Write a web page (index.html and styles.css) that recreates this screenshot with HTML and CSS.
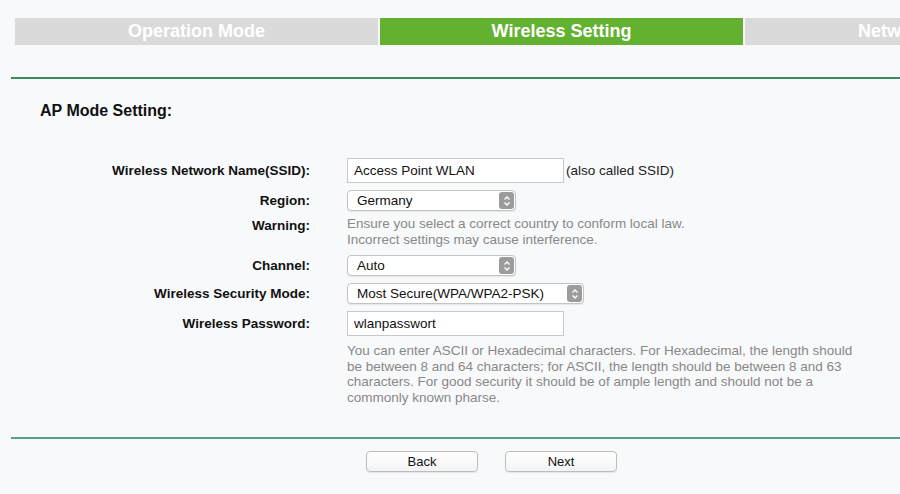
FILE: index.html
```html
<!DOCTYPE html>
<html lang="en">
<head>
    <meta charset="UTF-8">
    <title>Quick Setup - Wireless Setting</title>
    <link rel="stylesheet" href="styles.css">
</head>
<body>
    <div class="steps">
        <div class="step">Operation Mode</div>
        <div class="step active">Wireless Setting</div>
        <div class="step">Network Setting</div>
    </div>
    <hr class="line">

    <h2 class="title">AP Mode Setting:</h2>

    <div class="form">
        <label class="label">Wireless Network Name(SSID):</label>
        <div class="field">
            <input type="text" class="text-input" value="Access Point WLAN">
            <span class="note">(also called SSID)</span>
        </div>

        <label class="label">Region:</label>
        <div class="field">
            <span class="select region">Germany<span class="arrow"><svg width="8" height="12" viewBox="0 0 8 12"><path d="M1.5 4.5 L4 2 L6.5 4.5 M1.5 7.5 L4 10 L6.5 7.5" fill="none" stroke="#fff" stroke-width="1.4"/></svg></span></span>
        </div>

        <label class="label top">Warning:</label>
        <div class="field hint">Ensure you select a correct country to conform local law.<br>Incorrect settings may cause interference.</div>

        <label class="label">Channel:</label>
        <div class="field">
            <span class="select region">Auto<span class="arrow"><svg width="8" height="12" viewBox="0 0 8 12"><path d="M1.5 4.5 L4 2 L6.5 4.5 M1.5 7.5 L4 10 L6.5 7.5" fill="none" stroke="#fff" stroke-width="1.4"/></svg></span></span>
        </div>

        <label class="label">Wireless Security Mode:</label>
        <div class="field">
            <span class="select security">Most Secure(WPA/WPA2-PSK)<span class="arrow"><svg width="8" height="12" viewBox="0 0 8 12"><path d="M1.5 4.5 L4 2 L6.5 4.5 M1.5 7.5 L4 10 L6.5 7.5" fill="none" stroke="#fff" stroke-width="1.4"/></svg></span></span>
        </div>

        <label class="label">Wireless Password:</label>
        <div class="field">
            <input type="text" class="text-input" value="wlanpasswort">
        </div>

        <div></div>
        <div class="field hint help">You can enter ASCII or Hexadecimal characters. For Hexadecimal, the length should be between 8 and 64 characters; for ASCII, the length should be between 8 and 63 characters. For good security it should be of ample length and should not be a commonly known pharse.</div>
    </div>

    <hr class="line bottom">

    <div class="buttons">
        <button class="btn">Back</button>
        <button class="btn">Next</button>
    </div>
</body>
</html>
```

FILE: styles.css
```css
* {
    margin: 0;
    padding: 0;
    box-sizing: border-box;
    font-family: "Liberation Sans", Arial, sans-serif;
}
body {
    background-color: #f8f9fa;
    width: 900px;
    height: 494px;
    overflow: hidden;
}
.steps {
    display: flex;
    gap: 2px;
    padding: 18px 0 0 15px;
    white-space: nowrap;
}
.step {
    flex: 0 0 363px;
    height: 27px;
    line-height: 27px;
    text-align: center;
    background-color: #dadada;
    color: #fff;
    font-size: 18px;
    font-weight: bold;
}
.step.active {
    background-color: #62b22f;
}
.line {
    border: none;
    height: 2px;
    background-color: #3a8a5e;
    margin: 32px 0 0 11px;
}
.line.bottom {
    background-color: #55a08a;
    margin-top: 31px;
}
.title {
    font-size: 16px;
    font-weight: bold;
    color: #111;
    margin: 23px 0 0 40px;
}
.form {
    display: grid;
    grid-template-columns: 310px 1fr;
    column-gap: 37px;
    row-gap: 7px;
    align-items: center;
    margin-top: 38px;
}
.label {
    text-align: right;
    font-size: 13.5px;
    font-weight: bold;
    color: #111;
}
.label.top {
    align-self: start;
    margin-top: 0;
}
.field {
    display: flex;
    align-items: center;
    font-size: 13.5px;
    color: #222;
}
.text-input {
    width: 217px;
    height: 25px;
    border: 1px solid #c8c8c8;
    background: #fff;
    padding: 0 6px;
    font-size: 13.5px;
    color: #111;
}
.note {
    margin-left: 2px;
    font-size: 13.5px;
    color: #222;
}
.select {
    position: relative;
    display: block;
    height: 21px;
    line-height: 20px;
    border: 1px solid #c4c4c4;
    border-radius: 4px;
    background: #fff;
    padding-left: 9px;
    font-size: 13.5px;
    color: #111;
    box-shadow: 0 1px 1px rgba(0, 0, 0, 0.08);
}
.select.region {
    width: 169px;
}
.select.security {
    width: 237px;
}
.arrow {
    position: absolute;
    top: 1px;
    right: 1px;
    bottom: 1px;
    width: 15px;
    border-radius: 3px;
    background: #9c9c9c;
    display: flex;
    align-items: center;
    justify-content: center;
}
.hint {
    display: block;
    color: #888;
    line-height: 16px;
    font-size: 13.5px;
    margin-top: -2px;
}
.help {
    width: 520px;
    line-height: 15.7px;
    margin-top: 0;
}
.buttons {
    display: flex;
    gap: 27px;
    padding: 12px 0 0 366px;
}
.btn {
    width: 112px;
    height: 21px;
    border: 1px solid #bdbdbd;
    border-radius: 4px;
    background: linear-gradient(#fff, #f3f3f3);
    font-size: 13px;
    color: #111;
    box-shadow: 0 1px 1px rgba(0, 0, 0, 0.08);
}
```
